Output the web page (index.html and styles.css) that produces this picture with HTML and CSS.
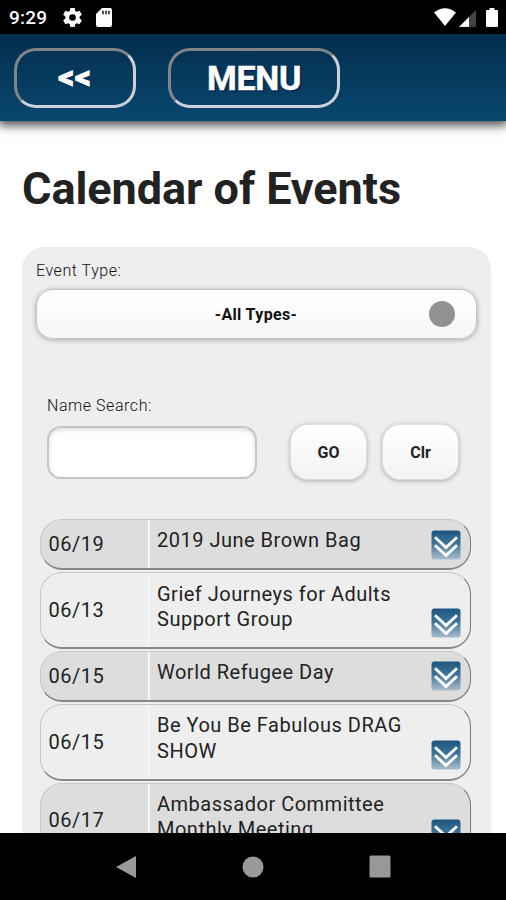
FILE: index.html
```html
<!DOCTYPE html>
<html lang="en">
<head>
<meta charset="utf-8">
<title>Calendar of Events</title>
<link rel="stylesheet" href="styles.css">
</head>
<body>
<svg class="defs" width="0" height="0">
  <defs>
    <linearGradient id="tile" x1="0" y1="0" x2="0" y2="1">
      <stop offset="0" stop-color="#1c5580"/>
      <stop offset=".45" stop-color="#3f7499"/>
      <stop offset="1" stop-color="#a9bccb"/>
    </linearGradient>
    <symbol id="expand" viewBox="0 0 30 30">
      <rect x=".5" y=".5" width="29" height="29" rx="3" fill="url(#tile)"/>
      <path d="M4 7.2l11 10.3L26 7.2M4 15.2l11 10.3 11-10.3" fill="none" stroke="#fff" stroke-width="2.9"/>
    </symbol>
  </defs>
</svg>
<div class="screen">
  <div class="status">
    <span class="clock">9:29</span>
    <svg class="gear" viewBox="2 2 20 20" width="19" height="19"><path fill="#fff" d="M19.43 12.98c.04-.32.07-.64.07-.98s-.03-.66-.07-.98l2.11-1.65c.19-.15.24-.42.12-.64l-2-3.46c-.12-.22-.39-.3-.61-.22l-2.49 1c-.52-.4-1.08-.73-1.69-.98l-.38-2.65C14.46 2.18 14.25 2 14 2h-4c-.25 0-.46.18-.49.42l-.38 2.65c-.61.25-1.17.59-1.69.98l-2.49-1c-.23-.09-.49 0-.61.22l-2 3.46c-.13.22-.07.49.12.64l2.11 1.65c-.04.32-.07.65-.07.98s.03.66.07.98l-2.11 1.65c-.19.15-.24.42-.12.64l2 3.46c.12.22.39.3.61.22l2.49-1c.52.4 1.08.73 1.69.98l.38 2.65c.03.24.24.42.49.42h4c.25 0 .46-.18.49-.42l.38-2.65c.61-.25 1.17-.59 1.69-.98l2.49 1c.23.09.49 0 .61-.22l2-3.46c.12-.22.07-.49-.12-.64l-2.11-1.65zM12 15.5a3.5 3.5 0 1 1 0-7 3.5 3.5 0 0 1 0 7z"/></svg>
    <svg class="card" viewBox="0 0 16 19" width="16" height="19"><path fill="#fff" d="M6 0h8q2 0 2 2v15q0 2-2 2H2q-2 0-2-2V6z"/><path d="M7 2.8v3.4M10 2.8v3.4M13 2.8v3.4" stroke="#222" stroke-width="1.6"/></svg>
    <svg class="wifi" viewBox="0 0 22 18" width="22" height="18"><path fill="#fff" d="M0 4.5Q11-4 22 4.5L11 18z"/></svg>
    <svg class="signal" viewBox="0 0 17 17" width="17" height="17"><path fill="#444" d="M17 0v17H0z"/><path fill="#fff" d="M10 7v10H0z"/></svg>
    <svg class="battery" viewBox="0 0 12 19" width="12" height="19"><path fill="#fff" d="M3.5 0h5v2H11q1 0 1 1v15q0 1-1 1H1q-1 0-1-1V3q0-1 1-1h2.5z"/></svg>
  </div>
  <header class="bar">
    <button class="nav back">&lt;&lt;</button>
    <button class="nav menu">MENU</button>
  </header>
  <main class="page">
    <h1>Calendar of Events</h1>
    <section class="panel">
      <label class="type-label">Event Type:</label>
      <div class="select"><span>-All Types-</span><i class="dot"></i></div>
      <label class="name-label">Name Search:</label>
      <div class="search">
        <input class="field" type="text">
        <button class="btn">GO</button>
        <button class="btn">Clr</button>
      </div>
      <div class="events">
        <div class="row dark"><div class="date">06/19</div><div class="name">2019 June Brown Bag</div><svg class="more"><use href="#expand"/></svg></div>
        <div class="row"><div class="date">06/13</div><div class="name">Grief Journeys for Adults<br>Support Group</div><svg class="more"><use href="#expand"/></svg></div>
        <div class="row dark"><div class="date">06/15</div><div class="name">World Refugee Day</div><svg class="more"><use href="#expand"/></svg></div>
        <div class="row"><div class="date">06/15</div><div class="name">Be You Be Fabulous DRAG<br>SHOW</div><svg class="more"><use href="#expand"/></svg></div>
        <div class="row dark"><div class="date">06/17</div><div class="name">Ambassador Committee<br>Monthly Meeting</div><svg class="more"><use href="#expand"/></svg></div>
      </div>
    </section>
  </main>
  <nav class="system">
    <svg viewBox="0 0 22 24" width="22" height="24"><path fill="#999" d="M21 1v22L1 12z"/></svg>
    <svg viewBox="0 0 22 22" width="22" height="22"><circle cx="11" cy="11" r="10.5" fill="#999"/></svg>
    <svg viewBox="0 0 22 23" width="22" height="23"><rect x=".5" y=".5" width="21" height="22" rx="1.5" fill="#999"/></svg>
  </nav>
</div>
</body>
</html>
```

FILE: styles.css
```css
* { box-sizing: border-box; }
body {
  margin: 0;
  font-family: Roboto, "Liberation Sans", sans-serif;
  color: #222;
}
.defs { display: block; height: 0; }
.screen {
  width: 506px;
  height: 900px;
  display: flex;
  flex-direction: column;
  overflow: hidden;
  background: #fff;
}
.status {
  flex: none;
  height: 34px;
  display: flex;
  align-items: center;
  background: #000;
  color: #fff;
  padding: 0 8px 0 9px;
}
.clock { width: 54px; font-size: 19px; font-weight: 500; line-height: 34px; padding-top: 2px; letter-spacing: .2px; }
.card { margin-left: 14px; }
.wifi { margin-left: auto; }
.signal { margin: 2px 10px 0 3px; }
.bar {
  flex: none;
  height: 87px;
  display: flex;
  gap: 32px;
  padding: 14px 14px 0;
  background: linear-gradient(#032e4d, #08476f);
  box-shadow: 0 2px 10px 2px rgba(0, 0, 0, .75);
  position: relative;
}
.nav {
  height: 60px;
  padding: 0;
  border: 3px solid;
  border-color: #818488 #cfcfda #cfcfda #818488;
  border-radius: 22px;
  background: none;
  color: #fff;
  font: 700 34px/54px Roboto, sans-serif;
  text-shadow: 1px 1px 2px #001040;
  -webkit-text-stroke: .5px #fff;
}
.back { width: 122px; font-size: 31px; letter-spacing: 1px; -webkit-text-stroke: 1.4px #fff; }
.menu { width: 172px; letter-spacing: -.3px; }
.page {
  flex: 1;
  min-height: 0;
  overflow: hidden;
  padding: 42px 15px 0 22px;
}
h1 { margin: 0 0 32px; font-size: 45px; font-weight: 700; line-height: 52px; letter-spacing: -.05px; white-space: nowrap; }
.panel {
  height: 640px;
  border-radius: 22px 22px 0 0;
  background: #eee;
  padding: 14px 14px 0;
}
label { display: block; font-size: 16px; font-weight: 300; line-height: 20px; letter-spacing: .55px; color: #111; }
.select {
  height: 50px;
  margin-top: 8px;
  border: 1.5px solid #c4c4c4;
  border-radius: 17px;
  background: linear-gradient(#fff, #f6f6f6);
  box-shadow: 0 1px 4px 1px #bbb;
  display: flex;
  align-items: center;
  justify-content: flex-end;
  padding-right: 21px;
  font-size: 16px;
  font-weight: 700;
  letter-spacing: .35px;
  color: #111;
}
.select span { flex: 1; text-align: center; padding-left: 46px; }
.dot { width: 26px; height: 26px; border-radius: 50%; background: #929292; }
.name-label { margin: 57px 0 0 11px; }
.search { display: flex; align-items: center; margin: 9px 0 0 11px; }
.field {
  width: 210px;
  height: 53px;
  padding: 0 10px;
  border: 2px solid #c6c6c6;
  border-radius: 14px;
  background: #fff;
  box-shadow: inset 0 2px 4px #ddd;
}
.btn {
  width: 75px;
  height: 54px;
  padding: 0;
  border: 0;
  border-radius: 17px;
  background: linear-gradient(#fff, #f3f3f3);
  box-shadow: 0 0 0 1px #ddd, 0 1px 4px 1px #aaa;
  font: 700 16px Roboto, sans-serif;
  color: #222;
  margin-left: 17px;
}
.field + .btn { margin-left: 34px; }
.events { margin: 40px 6px 0 4px; display: grid; gap: 2px; }
.row {
  display: flex;
  min-height: 51.2px;
  border: 1px solid;
  border-color: #c8c8c8 #777 #888 #c8c8c8;
  border-bottom-width: 2px;
  border-radius: 22px;
}
.dark { background: #ddd; }
.date {
  width: 109px;
  padding-left: 7.5px;
  display: flex;
  align-items: center;
  font-size: 20px;
  letter-spacing: .5px;
  border-right: 2px solid #f4f4f4;
}
.name { flex: 1; padding: 8.4px 0 14.2px 7px; font-size: 20px; line-height: 25.5px; letter-spacing: .5px; white-space: nowrap; }
.more { width: 30px; height: 30px; align-self: flex-end; margin: 0 9.5px 8.6px 0; }
.system {
  flex: none;
  height: 67px;
  background: #000;
  display: flex;
  align-items: center;
  justify-content: space-between;
  padding: 0 115px;
}
```
